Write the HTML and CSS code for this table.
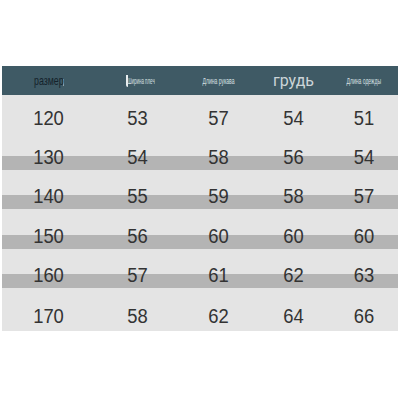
FILE: index.html
```html
<!DOCTYPE html>
<html lang="ru">
<head>
<meta charset="utf-8">
<link rel="stylesheet" href="styles.css">
</head>
<body>
<div class="table">
  <div class="head">
    <div class="hc"><span class="h-size">размер</span><span class="mark"></span></div>
    <div class="hc shift"><span class="stroke"></span><span class="h-small narrow">Ширина плеч</span></div>
    <div class="hc"><span class="h-small">Длина рукава</span></div>
    <div class="hc"><span class="h-chest">грудь</span></div>
    <div class="hc"><span class="h-small">Длина одежды</span></div>
  </div>
  <div class="tbody">
    <div class="row first"><span>120</span><span>53</span><span>57</span><span>54</span><span>51</span></div>
    <div class="row striped"><span>130</span><span>54</span><span>58</span><span>56</span><span>54</span></div>
    <div class="row striped"><span>140</span><span>55</span><span>59</span><span>58</span><span>57</span></div>
    <div class="row striped"><span>150</span><span>56</span><span>60</span><span>60</span><span>60</span></div>
    <div class="row striped"><span>160</span><span>57</span><span>61</span><span>62</span><span>63</span></div>
    <div class="row last"><span>170</span><span>58</span><span>62</span><span>64</span><span>66</span></div>
  </div>
</div>
</body>
</html>
```
FILE: styles.css
```css
html, body {
  margin: 0;
  padding: 0;
  background: #ffffff;
}
body {
  width: 400px;
  height: 400px;
  overflow: hidden;
  font-family: "Liberation Sans", Arial, sans-serif;
}
.table {
  margin: 66px 0 0 2px;
  width: 396px;
}
.head, .row {
  display: grid;
  grid-template-columns: 93px 85px 77px 73px 68px;
}
.head {
  height: 29px;
  background: #3f5a65;
}
.hc {
  display: flex;
  align-items: center;
  justify-content: center;
  height: 29px;
}
.hc.shift {
  padding-left: 7px;
}
.h-size {
  display: inline-block;
  font-size: 13px;
  color: #14222b;
  transform: scaleX(0.68);
  margin-right: -12px;
  margin-left: -6px;
}
.mark {
  display: inline-block;
  width: 1.5px;
  height: 7px;
  background: #8ea1a9;
  margin-left: 4px;
  margin-top: 4px;
}
.stroke {
  display: inline-block;
  width: 2px;
  height: 12px;
  background: #e8eef0;
  border-radius: 0 0 0 3px;
  margin-right: 0;
  margin-left: -2px;
}
.h-small {
  display: inline-block;
  font-size: 9px;
  color: #d9e1e4;
  white-space: nowrap;
  transform: scaleX(0.56);
  margin: 0 -12px;
}
.h-small.narrow {
  font-size: 8.5px;
  transform: scaleX(0.52);
  margin: 0 -13px;
}
.h-chest {
  font-family: Roboto, "Liberation Sans", sans-serif;
  font-size: 16px;
  color: #ccd5d8;
  margin-top: -1px;
}
.tbody {
  background: #e4e4e4;
}
.row span {
  text-align: center;
  font-size: 20px;
  color: #333333;
  display: block;
  transform: scaleX(0.92);
}
.row {
  height: 39.4px;
  line-height: 39.4px;
}
.row.first {
  height: 43px;
  box-sizing: border-box;
  padding-top: 4px;
  line-height: 39px;
}
.row.striped {
  background: linear-gradient(to bottom, transparent 18px, #b4b4b4 18px, #b4b4b4 32px, transparent 32px);
}
.row.last {
  height: 35.4px;
  line-height: 40px;
}
```
